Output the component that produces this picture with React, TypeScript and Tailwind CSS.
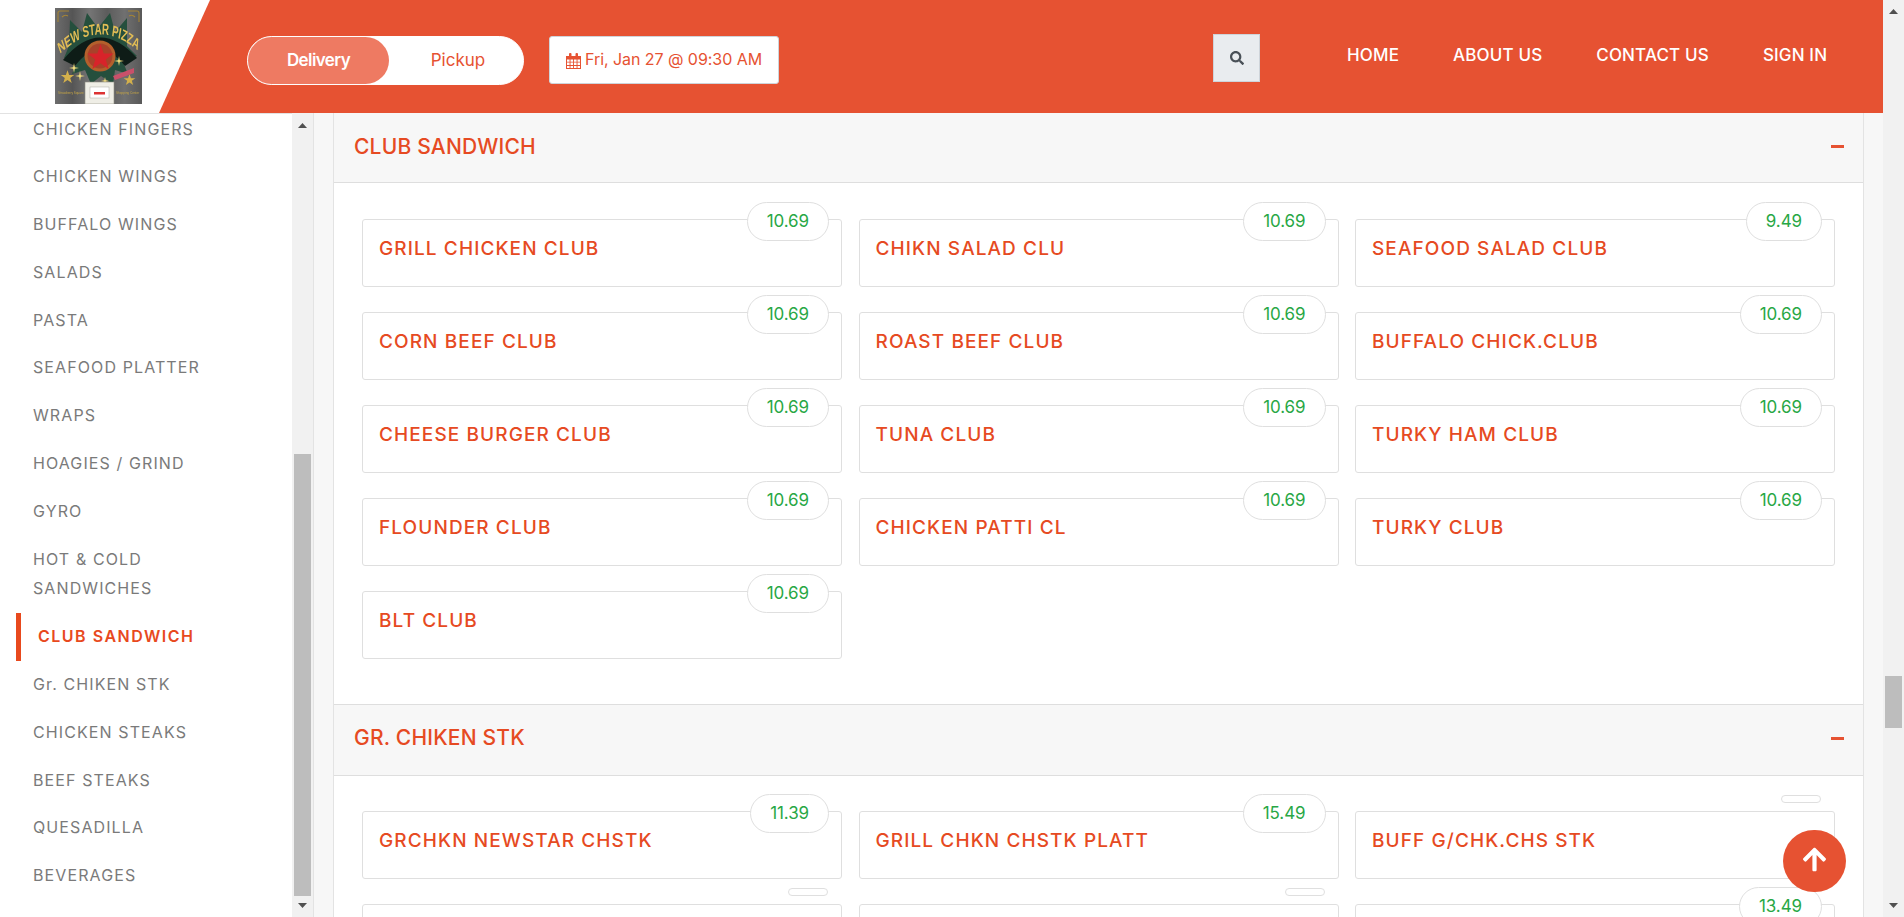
import { FaSearch, FaArrowUp } from "react-icons/fa";

const side = [
  "CHICKEN FINGERS",
  "CHICKEN WINGS",
  "BUFFALO WINGS",
  "SALADS",
  "PASTA",
  "SEAFOOD PLATTER",
  "WRAPS",
  "HOAGIES / GRIND",
  "GYRO",
  "HOT & COLD SANDWICHES",
  "CLUB SANDWICH",
  "Gr. CHIKEN STK",
  "CHICKEN STEAKS",
  "BEEF STEAKS",
  "QUESADILLA",
  "BEVERAGES",
];

const club = [
  ["GRILL CHICKEN CLUB", "10.69"],
  ["CHIKN SALAD CLU", "10.69"],
  ["SEAFOOD SALAD CLUB", "9.49"],
  ["CORN BEEF CLUB", "10.69"],
  ["ROAST BEEF CLUB", "10.69"],
  ["BUFFALO CHICK.CLUB", "10.69"],
  ["CHEESE BURGER CLUB", "10.69"],
  ["TUNA CLUB", "10.69"],
  ["TURKY HAM CLUB", "10.69"],
  ["FLOUNDER CLUB", "10.69"],
  ["CHICKEN PATTI CL", "10.69"],
  ["TURKY CLUB", "10.69"],
  ["BLT CLUB", "10.69"],
];

const steak = [
  ["GRCHKN NEWSTAR CHSTK", "11.39"],
  ["GRILL CHKN CHSTK PLATT", "15.49"],
  ["BUFF G/CHK.CHS STK", ""],
  ["", ""],
  ["", ""],
  ["", "13.49"],
];

function Card({ name, price }: { name: string; price: string }) {
  return (
    <div className="relative h-[68px] rounded-[3px] border border-[#dfdfdf] bg-white pl-[16px] pt-[15px]">
      <div className="text-[19px] leading-[27px] font-medium tracking-[1.1px] text-[#e64a22]">{name}</div>
      <div
        className={
          price
            ? "absolute right-[12px] top-[-18px] flex h-[39px] items-center rounded-[20px] border border-[#dfdfdf] bg-white px-[19px] text-[17px] tracking-[-0.1px] text-[#28a745]"
            : "absolute right-[13px] top-[-17px] h-[8px] w-[40px] rounded-[4px] border border-[#dfdfdf] bg-white"
        }
      >
        {price}
      </div>
    </div>
  );
}

function Minus() {
  return <div className="h-[3px] w-[13px] bg-[#e65232]" />;
}

function Up({ className }: { className: string }) {
  return (
    <svg width="9" height="5" viewBox="0 0 9 5" className={className}>
      <path d="M4.5 0 9 5H0z" fill="#505050" />
    </svg>
  );
}

function Down({ className }: { className: string }) {
  return (
    <svg width="9" height="5" viewBox="0 0 9 5" className={className}>
      <path d="M0 0h9L4.5 5z" fill="#505050" />
    </svg>
  );
}

function Logo() {
  const star = "M50 8 61 40 95 40 68 60 78 93 50 73 22 93 32 60 5 40 39 40z";
  const spark = "M0-5 .8-.8 5 0 .8.8 0 5-.8.8-5 0-.8-.8z";
  return (
    <svg width="87" height="96" viewBox="0 0 87 96" className="mt-[8px] ml-[55px] shrink-0 blur-[0.35px]">
      <defs>
        <linearGradient id="wood" x1="0" x2="1" y1="0" y2="0">
          <stop offset="0" stopColor="#6d6d6d" />
          <stop offset="0.2" stopColor="#555" />
          <stop offset="0.4" stopColor="#757575" />
          <stop offset="0.6" stopColor="#5c5c5c" />
          <stop offset="0.8" stopColor="#707070" />
          <stop offset="1" stopColor="#585858" />
        </linearGradient>
        <path id="arc" d="M7 40 Q61 7 117 38" fill="none" />
      </defs>
      <rect width="87" height="96" fill="url(#wood)" />
      <path d="M14 38 15 12 27 24 32 5 43 20 55 5 60 24 72 10 72 38 82 48 68 54 73 66 60 62 58 76 46 68 36 76 30 62 17 66 22 54 9 50z" fill="#254f3d" />
      <path d="M8 52 Q44 8 82 50 L70 58 Q44 26 20 58z" fill="#0e1c17" />
      <g transform="scale(.72 1.15)">
        <text fontFamily="Liberation Sans, sans-serif" fontWeight="700" fontSize="13.500" fill="#e2bd55">
          <textPath href="#arc">NEW STAR PIZZA</textPath>
        </text>
      </g>
      <circle cx="45" cy="48" r="15.5" fill="#b4602c" />
      <circle cx="45" cy="48" r="12.5" fill="#a8422a" />
      <path transform="translate(31 34) scale(.29)" d={star} fill="#d8232a" />
      <path transform="translate(5 61) scale(.15)" d={star} fill="#d3b04c" />
      <path transform="translate(68 65) scale(.13)" d={star} fill="#d3b04c" />
      <path transform="translate(19 60)" d={spark} fill="#f6e27f" />
      <path transform="translate(25 68)" d={spark} fill="#f6e27f" />
      <path transform="translate(64 53)" d={spark} fill="#f6e27f" />
      <path transform="translate(50 73) scale(.8)" d={spark} fill="#f6e27f" />
      <path d="M58 68 79 60 79 65 60 72z" fill="#c9506a" />
      <rect x="30" y="74" width="29" height="22" fill="#efeee6" stroke="#8c8c80" strokeWidth="0.6" />
      <rect x="35" y="79" width="19" height="11" fill="#fff" stroke="#9a9a90" strokeWidth="0.4" />
      <rect x="39" y="84" width="11" height="2.500" fill="#d33" />
      <text x="3" y="86" fontFamily="Liberation Sans, sans-serif" fontSize="3.100" fill="#c5a545">Strawberry Square</text>
      <text x="61" y="86" fontFamily="Liberation Sans, sans-serif" fontSize="3.100" fill="#c5a545">Shopping Center</text>
      <path d="M3 14V5Q3 3 5 3h9M84 14V5Q84 3 82 3H73M7 9q3-3 6-1M80 9q-3-3-6-1" stroke="#a58436" strokeWidth="1.1" fill="none" />
    </svg>
  );
}

export default function App() {
  return (
    <div className="relative flex h-screen w-full overflow-hidden bg-white font-['Inter','Liberation_Sans',sans-serif]">
      <div className="flex min-w-0 flex-1 flex-col">
        <header className="flex h-[113px] shrink-0 items-start bg-[#e65232]">
          <div className="h-[113px] w-[210px] shrink-0 bg-white [clip-path:polygon(0_0,100%_0,159px_100%,0_100%)]">
            <Logo />
          </div>
          <div className="ml-[37px] mt-[36px] flex h-[49px] w-[277px] shrink-0 rounded-[25px] border border-white bg-white">
            <div className="flex w-[141px] items-center justify-center rounded-[24px] bg-[#ee7a62] text-[17px] font-semibold tracking-[-0.6px] text-white">
              Delivery
            </div>
            <div className="flex flex-1 items-center justify-center pl-[4px] text-[17px] text-[#e65232]">Pickup</div>
          </div>
          <div className="ml-[25px] mt-[36px] flex h-[48px] w-[230px] shrink-0 items-center rounded-[3px] border border-[#ced4da] bg-white pb-[2px] pl-[16px] text-[16px] tracking-[-0.05px] text-[#e65232]">
            <svg width="15" height="16" viewBox="0 0 15 16" className="mr-[4px] mt-[3px] shrink-0">
              <path d="M0 3h15v13H0z M1 6.5v2.2h2.6V6.500z M4.500 6.500v2.200h2.600V6.500z M8 6.500v2.200h2.600V6.500z M11.500 6.500v2.200H14V6.500z M1 9.600v2.400h2.600V9.600z M4.500 9.600v2.400h2.600V9.600z M8 9.600v2.400h2.600V9.600z M11.500 9.600v2.400H14V9.600z M1 12.900V15h2.600v-2.100z M4.500 12.900V15h2.600v-2.100z M8 12.900V15h2.600v-2.100z M11.500 12.900V15H14v-2.100z" fill="#e65232" fillRule="evenodd" />
              <rect x="3" y="0" width="2.500" height="4.500" rx="1" fill="#e65232" />
              <rect x="9.500" y="0" width="2.500" height="4.500" rx="1" fill="#e65232" />
            </svg>
            Fri, Jan 27 @ 09:30 AM
          </div>
          <div className="ml-[434px] mt-[34px] flex h-[48px] w-[47px] shrink-0 items-center justify-center border border-[#ced4da] bg-[#e9ecef] text-[#495057]">
            <FaSearch className="h-[14px] w-[14px]" />
          </div>
          <nav className="ml-[87px] mt-[44px] flex gap-[54px] text-[17px] leading-[22px] font-medium tracking-[0.15px] whitespace-nowrap text-white">
            <span>HOME</span>
            <span>ABOUT US</span>
            <span>CONTACT US</span>
            <span>SIGN IN</span>
          </nav>
        </header>

        <div className="flex min-h-0 flex-1">
          <aside className="flex w-[314px] shrink-0 border-r border-[#e3e3e3]">
            <div className="min-w-0 flex-1 overflow-hidden border-t border-[#e2e2e2]">
              <ul className="-mt-[8.500px] text-[16px] leading-[29.8px] tracking-[1.1px] text-[#7a7a7a]">
                {side.map((s) =>
                  s === "CLUB SANDWICH" ? (
                    <li key={s} className="ml-[16px] border-l-[5px] border-[#e8491d] py-[9px] pl-[17px] font-semibold tracking-[1.5px] text-[#e8491d]">
                      {s}
                    </li>
                  ) : (
                    <li key={s} className="py-[9px] pl-[33px] pr-[70px]">
                      {s}
                    </li>
                  ),
                )}
              </ul>
            </div>
            <div className="flex w-[21px] shrink-0 flex-col items-center bg-[#f1f1f1]">
              <Up className="mt-[10px]" />
              <div className="mt-auto h-[442px] w-[17px] bg-[#bdbdbd]" />
              <Down className="mb-[9px] mt-[7px]" />
            </div>
          </aside>

          <main className="min-w-0 flex-1 overflow-hidden bg-[#f7f7f7] pl-[19px] pr-[19px]">
            <div className="border-x border-[#e3e3e3] bg-white">
              <div className="flex h-[70px] items-center justify-between border-b border-[#dedede] bg-[#f7f7f7] pb-[2px] pl-[20px] pr-[19px]">
                <h2 className="text-[21px] font-medium tracking-[0.2px] text-[#e64a22]">CLUB SANDWICH</h2>
                <Minus />
              </div>
              <div className="grid grid-cols-3 gap-x-[16.5px] gap-y-[25px] px-[28px] pb-[45px] pt-[36px]">
                {club.map(([n, p]) => (
                  <Card key={n} name={n} price={p} />
                ))}
              </div>
              <div className="flex h-[72px] items-center justify-between border-y border-[#dedede] bg-[#f7f7f7] pb-[4px] pl-[20px] pr-[19px]">
                <h2 className="text-[21px] font-medium tracking-[0.2px] text-[#e64a22]">GR. CHIKEN STK</h2>
                <Minus />
              </div>
              <div className="grid grid-cols-3 gap-x-[16.5px] gap-y-[25px] px-[28px] pb-[45px] pt-[35px]">
                {steak.map(([n, p], i) => (
                  <Card key={i} name={n} price={p} />
                ))}
              </div>
            </div>
          </main>
        </div>
      </div>

      <div className="flex w-[21px] shrink-0 flex-col items-center bg-[#f1f1f1]">
        <Up className="mt-[9px]" />
        <div className="mt-[662px] h-[52px] w-[17px] bg-[#bdbdbd]" />
        <Down className="mt-auto mb-[9px]" />
      </div>

      <div className="absolute left-[1783px] top-[830px] flex h-[62px] w-[63px] items-center justify-center rounded-full bg-[#e65232] pb-[4px] text-white">
        <FaArrowUp className="h-[27px] w-[27px]" />
      </div>
    </div>
  );
}
